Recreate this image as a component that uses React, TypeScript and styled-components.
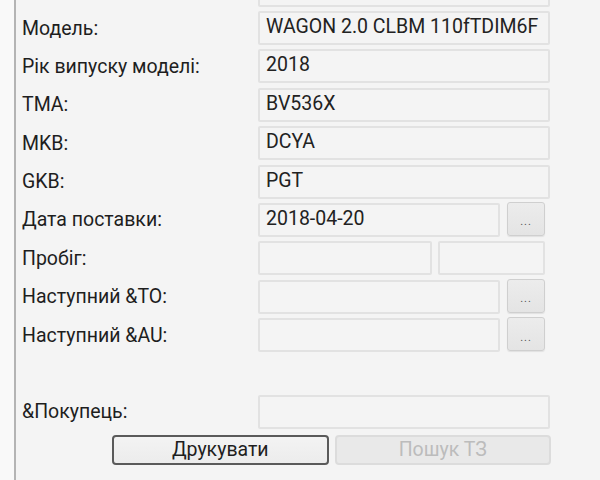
import React from "react";
import styled, { createGlobalStyle } from "styled-components";

const Global = createGlobalStyle`
  html, body { margin: 0; padding: 0; }
  body {
    width: 600px;
    height: 480px;
    overflow: hidden;
    background: #f4f4f4;
    font-family: Roboto, "Noto Sans", "DejaVu Sans", sans-serif;
  }
`;

const Page = styled.div`
  display: flex;
  width: 600px;
  height: 480px;
  overflow: hidden;
  background: #f4f4f4;
`;

const Gutter = styled.div`
  width: 14px;
  background: #f9f9f9;
  flex: none;
`;

const Divider = styled.div`
  width: 2px;
  background: #b4b4b4;
  flex: none;
`;

const Content = styled.div`
  flex: 1;
  padding-left: 6px;
  overflow: hidden;
`;

const Form = styled.div`
  display: grid;
  grid-template-columns: 236px 292px;
  grid-auto-rows: 32px;
  row-gap: 6.4px;
  margin-top: -25.4px;
`;

const Label = styled.div`
  display: flex;
  align-items: center;
  font-size: 19.5px;
  color: #1e1e1e;
  white-space: nowrap;
  margin-top: -2px;
`;

const FieldCell = styled.div`
  display: flex;
  align-items: stretch;
`;

const Field = styled.div<{ $width?: number }>`
  flex: ${(p) => (p.$width ? `0 0 ${p.$width}px` : "1 1 0")};
  min-width: 0;
  box-sizing: border-box;
  border: 2px solid #e2e2e2;
  border-radius: 2px;
  background: #f4f4f4;
  padding: 0 6px 3px;
  display: flex;
  align-items: center;
  font-size: 19.5px;
  color: #222;
  white-space: nowrap;
  overflow: hidden;
  margin-top: -2px;
`;

const Gap = styled.div`
  flex: 0 0 6px;
`;

const DotsButton = styled.div`
  flex: 0 0 38px;
  box-sizing: border-box;
  margin: -3px 5px 1px 7px;
  border: 1px solid #cfcfcf;
  border-radius: 3px;
  background: linear-gradient(#ececec, #e4e4e4);
  box-shadow: 0 1px 1px rgba(0, 0, 0, 0.08);
  display: flex;
  align-items: center;
  justify-content: center;
  font-size: 11px;
  letter-spacing: 1px;
  color: #555;
  padding-top: 6px;
`;

const Spacer = styled.div`
  grid-column: 1 / -1;
`;

const ButtonRow = styled.div`
  grid-column: 1 / -1;
  display: flex;
  gap: 6px;
  padding-left: 90px;
  margin-right: -1px;
  height: 30px;
`;

const Button = styled.div<{ $disabled?: boolean }>`
  flex: 1 1 0;
  box-sizing: border-box;
  border-radius: 4px;
  border: ${(p) => (p.$disabled ? "2px solid #dcdcdc" : "2px solid #5a5a5a")};
  background: ${(p) => (p.$disabled ? "#e9e9e9" : "linear-gradient(#f3f3f3, #ececec)")};
  color: ${(p) => (p.$disabled ? "#bcbcbc" : "#1e1e1e")};
  font-size: 19.5px;
  display: flex;
  align-items: center;
  justify-content: center;
  padding-bottom: 2px;
`;

type Row = { label: string; value?: string; dots?: boolean; split?: boolean };

const rows: Row[] = [
  { label: "Ідентифікаційний номер кузову:", value: "" },
  { label: "Модель:", value: "WAGON 2.0 CLBM 110fTDIM6F" },
  { label: "Рік випуску моделі:", value: "2018" },
  { label: "TMA:", value: "BV536X" },
  { label: "MKB:", value: "DCYA" },
  { label: "GKB:", value: "PGT" },
  { label: "Дата поставки:", value: "2018-04-20", dots: true },
  { label: "Пробіг:", split: true },
  { label: "Наступний &TO:", value: "", dots: true },
  { label: "Наступний &AU:", value: "", dots: true },
];

export default function App() {
  return (
    <Page>
      <Global />
      <Gutter />
      <Divider />
      <Content>
        <Form>
          {rows.map((r) => (
            <React.Fragment key={r.label}>
              <Label>{r.label}</Label>
              <FieldCell>
                {r.split ? (
                  <>
                    <Field $width={174} />
                    <Gap />
                    <Field $width={107} />
                  </>
                ) : (
                  <>
                    <Field>{r.value}</Field>
                    {r.dots && <DotsButton>...</DotsButton>}
                  </>
                )}
              </FieldCell>
            </React.Fragment>
          ))}
          <Spacer />
          <Label>&Покупець:</Label>
          <FieldCell>
            <Field />
          </FieldCell>
          <ButtonRow>
            <Button>Друкувати</Button>
            <Button $disabled>Пошук ТЗ</Button>
          </ButtonRow>
        </Form>
      </Content>
    </Page>
  );
}
